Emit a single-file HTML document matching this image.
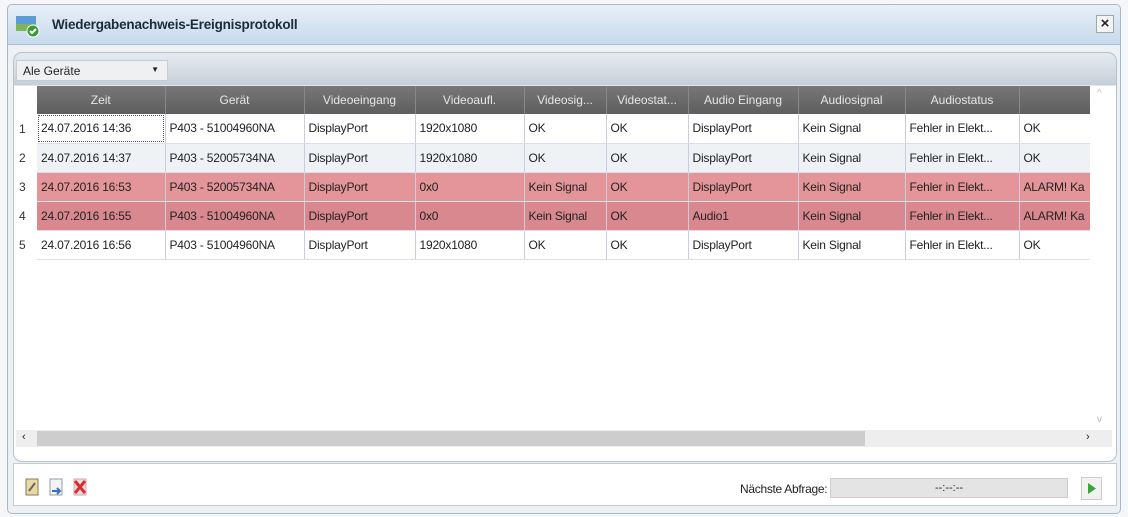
<!DOCTYPE html>
<html><head><meta charset="utf-8"><style>
*{box-sizing:border-box;margin:0;padding:0}
body{width:1128px;height:517px;background:#f4f6f8;font-family:"Liberation Sans",sans-serif;font-size:12px;color:#222;position:relative;overflow:hidden}
.win{position:absolute;left:7px;top:4px;width:1114px;height:510px;border:1px solid #a9b8c8;border-radius:5px;background:#eef1f4}
.title{position:absolute;left:0;top:0;right:0;height:40px;background:linear-gradient(#e8f0f8,#c7d9ec);border-radius:5px 5px 0 0;border-bottom:1px solid #a8bcd2}
.title span{position:absolute;left:44px;top:12px;font-weight:bold;font-size:13.5px;color:#1d2a38;letter-spacing:-0.2px}
.close{position:absolute;right:6px;top:10px;width:18px;height:18px;border:1px solid #9aa;background:#f4f4f4;font-weight:bold;font-size:15px;text-align:center;line-height:16px}
.panel{position:absolute;left:13px;top:52px;width:1104px;height:410px;border:1px solid #b6c2ce;border-radius:9px;background:linear-gradient(#e6ebf0,#c5cfd9 32px,#fff 33px)}
.combo{position:absolute;left:16px;top:60px;width:152px;height:21px;background:#eef0f2;border:1px solid #c8ccd0;font-size:12px;padding:3px 6px}
.combo b{position:absolute;right:8px;top:4px;font-size:8px}
table{position:absolute;left:16px;top:86px;border-collapse:collapse;table-layout:fixed}
th{background:linear-gradient(#777,#5e5e5e);color:#e6e6e6;font-weight:normal;height:28px;border-right:1px solid #888;font-size:12px}
td{height:29px;border-right:1px solid #ccd;border-bottom:1px solid #dde;padding-left:4px;white-space:nowrap;overflow:hidden;vertical-align:middle;font-size:12px;letter-spacing:-0.2px}
td.n{border:none;background:#fff;padding-left:3px;color:#333}
tr.w td{background:#fff} tr.g td{background:#eef2f5} tr.r td{background:#e4959a} tr.r2 td{background:#d98890}
tr.r td.n,tr.r2 td.n,tr.g td.n{background:#fff}
.vs{position:absolute;left:1090px;top:86px;width:22px;height:344px;background:#fff}
.hs{position:absolute;left:16px;top:430px;width:1096px;height:17px;background:#eee}
.thumb{position:absolute;left:21px;top:1px;width:828px;height:15px;background:#cdcdcd}
.bot{position:absolute;left:13px;top:463px;width:1104px;height:43px;border:1px solid #c4ccd4;background:#fff}
.ic{position:absolute;top:477px;width:14px;height:20px}
.nf{position:absolute;left:830px;top:478px;width:238px;height:20px;background:#e4e4e4;border:1px solid #ccc;text-align:center;font-size:11px;line-height:18px}
.play{position:absolute;left:1081px;top:477px;width:21px;height:23px;border:1px solid #ccc;background:#f2f2f2}
</style></head><body>
<div class="win">
<div class="title"><svg style="position:absolute;left:8px;top:9px" width="24" height="24"><rect x="0" y="2" width="20" height="15" fill="#5d9ad8"/><rect x="0" y="10" width="20" height="7" fill="#7cb65a"/><circle cx="17" cy="17" r="6" fill="#3a9a3a" stroke="#fff"/><path d="M14 17l2 2 4-4" stroke="#fff" stroke-width="2" fill="none"/></svg><span>Wiedergabenachweis-Ereignisprotokoll</span></div>
<div class="close">×</div>
</div>
<div class="panel"></div>
<div class="combo">Ale Geräte<b>▼</b></div>
<table>
<colgroup><col width="21"><col width="128"><col width="139"><col width="111"><col width="109"><col width="82"><col width="82"><col width="110"><col width="107"><col width="114"><col width="71"></colgroup>
<tr><th style="background:#fff;border:none"></th><th>Zeit</th><th>Gerät</th><th>Videoeingang</th><th>Videoaufl.</th><th>Videosig...</th><th>Videostat...</th><th>Audio Eingang</th><th>Audiosignal</th><th>Audiostatus</th><th></th></tr>
<tr class="w"><td class="n">1</td><td style="outline:1px dotted #555;outline-offset:-2px">24.07.2016 14:36</td><td>P403 - 51004960NA</td><td>DisplayPort</td><td>1920x1080</td><td>OK</td><td>OK</td><td>DisplayPort</td><td>Kein Signal</td><td>Fehler in Elekt...</td><td>OK</td></tr>
<tr class="g"><td class="n">2</td><td>24.07.2016 14:37</td><td>P403 - 52005734NA</td><td>DisplayPort</td><td>1920x1080</td><td>OK</td><td>OK</td><td>DisplayPort</td><td>Kein Signal</td><td>Fehler in Elekt...</td><td>OK</td></tr>
<tr class="r"><td class="n">3</td><td>24.07.2016 16:53</td><td>P403 - 52005734NA</td><td>DisplayPort</td><td>0x0</td><td>Kein Signal</td><td>OK</td><td>DisplayPort</td><td>Kein Signal</td><td>Fehler in Elekt...</td><td>ALARM! Ka</td></tr>
<tr class="r2"><td class="n">4</td><td>24.07.2016 16:55</td><td>P403 - 51004960NA</td><td>DisplayPort</td><td>0x0</td><td>Kein Signal</td><td>OK</td><td>Audio1</td><td>Kein Signal</td><td>Fehler in Elekt...</td><td>ALARM! Ka</td></tr>
<tr class="w"><td class="n">5</td><td>24.07.2016 16:56</td><td>P403 - 51004960NA</td><td>DisplayPort</td><td>1920x1080</td><td>OK</td><td>OK</td><td>DisplayPort</td><td>Kein Signal</td><td>Fehler in Elekt...</td><td>OK</td></tr>
</table>
<div class="vs"><span style="position:absolute;left:7px;top:2px;color:#bbb;font-size:10px">^</span><span style="position:absolute;left:7px;top:328px;color:#bbb;font-size:10px">v</span></div>
<div class="hs"><span style="position:absolute;left:6px;top:1px;font-size:11px">‹</span><div class="thumb"></div><span style="position:absolute;left:1070px;top:1px;font-size:11px">›</span></div>
<div class="bot"></div>
<svg class="ic" style="left:25px" viewBox="0 0 14 20"><rect x="1" y="2" width="12" height="16" fill="#e8d9a8" stroke="#8a7a50"/><path d="M4 14l6-8" stroke="#666" stroke-width="2"/></svg>
<svg class="ic" style="left:49px" viewBox="0 0 14 20"><rect x="1" y="2" width="12" height="16" fill="#f4f4f4" stroke="#99a"/><path d="M3 14h7M8 11l3 3-3 3" stroke="#3a6ed0" stroke-width="2" fill="none"/></svg>
<svg class="ic" style="left:73px" viewBox="0 0 14 20"><rect x="1" y="2" width="12" height="16" fill="#f0dcdc" stroke="#caa"/><path d="M2 4l10 12M12 4L2 16" stroke="#d83030" stroke-width="3"/></svg>
<div style="position:absolute;left:740px;top:482px;font-size:12px;letter-spacing:-0.3px">Nächste Abfrage:</div>
<div class="nf">--:--:--</div>
<div class="play"><svg width="19" height="21"><path d="M6 5l8 5.5-8 5.5z" fill="#3aa53a"/></svg></div>
</body></html>
